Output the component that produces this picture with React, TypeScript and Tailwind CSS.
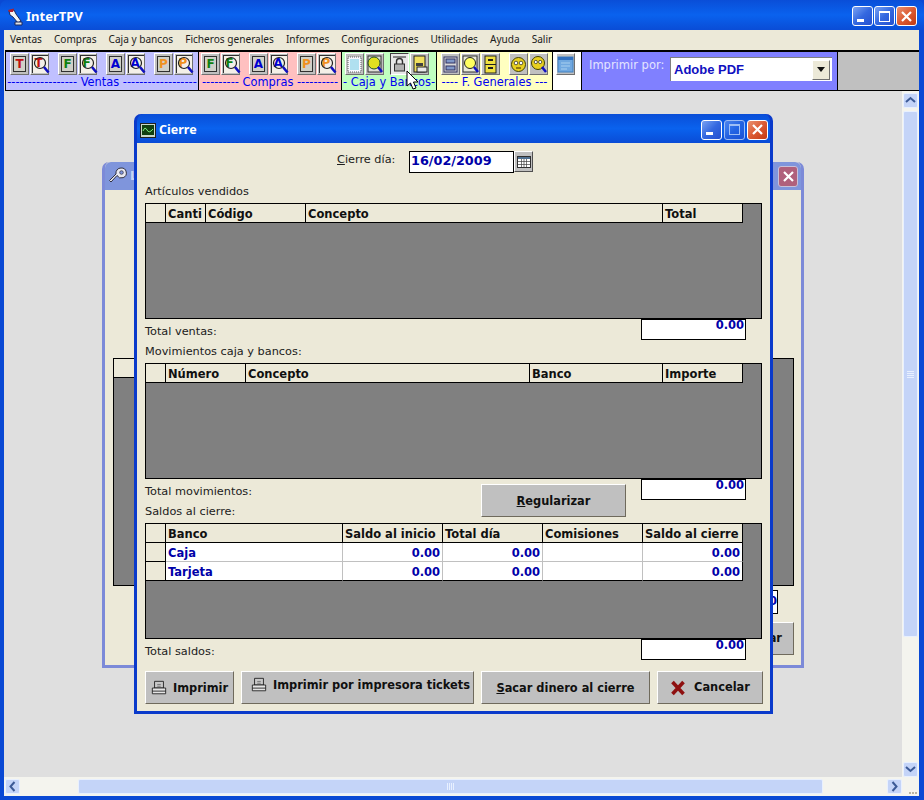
import React from "react";

const UI = "font-['DejaVu_Sans',sans-serif]";
const MENU = "font-['Noto_Sans',sans-serif]";

function WinBtn({ kind, dim }: { kind: "min" | "max" | "close"; dim?: boolean }) {
  const bg =
    kind === "close"
      ? "bg-gradient-to-br from-[#e8906f] via-[#dc5a32] to-[#c23a12]"
      : "bg-gradient-to-br from-[#7ba2f2] via-[#3468e0] to-[#2450d0]";
  return (
    <div className={`w-[21px] h-[20px] rounded-[3px] border border-white flex items-center justify-center ${bg} ${dim ? "opacity-60" : ""}`}>
      <svg width="13" height="13" viewBox="0 0 13 13">
        {kind === "min" && <rect x="1" y="9" width="7" height="3" fill="#fff" />}
        {kind === "max" && (
          <g fill="none" stroke="#fff">
            <rect x="1.5" y="1.5" width="10" height="10" />
            <rect x="1" y="1" width="11" height="2" fill="#fff" stroke="none" />
          </g>
        )}
        {kind === "close" && <path d="M2 2 L11 11 M11 2 L2 11" stroke="#fff" strokeWidth="2.2" />}
      </svg>
    </div>
  );
}

function TBtn({ children, pressed }: { children?: React.ReactNode; pressed?: boolean }) {
  return (
    <div
      className={`relative w-[19px] h-[22px] flex items-center justify-center border ${
        pressed
          ? "border-t-[#404040] border-l-[#404040] border-b-white border-r-white bg-[#e8e8e8]"
          : "border-t-white border-l-white border-b-[#707070] border-r-[#707070] bg-[#c0c0c0]"
      }`}
    >
      {children}
    </div>
  );
}

function Letter({ c, color }: { c: string; color: string }) {
  return (
    <TBtn>
      <div className={`w-[13px] h-[16px] border border-[#303030] bg-[#d0d0c8] flex items-center justify-center text-[12px] leading-none font-bold ${UI} ${color}`}>
        {c}
      </div>
    </TBtn>
  );
}

function Mag({ c, color }: { c: string; color: string }) {
  return (
    <TBtn>
      <div className="relative w-[16px] h-[18px] border-l border-t border-[#303030] bg-[#f4f0e8]">
        <span className={`absolute left-[2px] top-[1px] text-[12px] leading-[13px] font-bold ${UI} ${color}`}>{c}</span>
        <svg className="absolute left-0 top-0" width="17" height="19" viewBox="0 0 17 19">
          <circle cx="7" cy="7" r="5.5" fill="none" stroke="#202020" strokeWidth="1.2" />
          <path d="M11 11 L15.5 16.5" stroke="#1010c0" strokeWidth="2.6" />
        </svg>
      </div>
    </TBtn>
  );
}

function IconBtn({ children, pressed }: { children: React.ReactNode; pressed?: boolean }) {
  return (
    <TBtn pressed={pressed}>
      <svg width="17" height="19" viewBox="0 0 17 19">
        {children}
      </svg>
    </TBtn>
  );
}

function Pair({ c, color }: { c: string; color: string }) {
  return (
    <div className="flex gap-[1px]">
      <Letter c={c} color={color} />
      <Mag c={c} color={color} />
    </div>
  );
}

function Dashes({ text }: { text: string }) {
  return (
    <div className={`h-[14px] overflow-hidden flex justify-center whitespace-nowrap text-[11.4px] leading-[13px] text-[#0000f0] ${UI}`}>
      <span>{text}</span>
    </div>
  );
}

function Toolbar() {
  return (
    <div className="h-[41px] ml-[1px] border-t-2 border-b border-l border-black flex bg-[#c0c0c0]">
      <div className="w-[193px] border-r border-black bg-[#c0c0ff]">
        <div className="h-[24px] pt-[1px] pl-[4px] flex gap-[9px]">
          <Pair c="T" color="text-[#c01010]" />
          <Pair c="F" color="text-[#108010]" />
          <Pair c="A" color="text-[#0000d0]" />
          <Pair c="P" color="text-[#f09020]" />
        </div>
        <Dashes text="----------------- Ventas ------------------" />
      </div>
      <div className="w-[143px] border-r border-black bg-[#ffc0c0]">
        <div className="h-[24px] pt-[1px] pl-[2px] flex gap-[9px]">
          <Pair c="F" color="text-[#108010]" />
          <Pair c="A" color="text-[#0000d0]" />
          <Pair c="P" color="text-[#f09020]" />
        </div>
        <Dashes text="--------- Compras ----------" />
      </div>
      <div className="w-[95px] border-r border-black bg-[#c0ffc0]">
        <div className="h-[24px] pt-[1px] pl-[3px] flex gap-[6px]">
          <div className="flex gap-[1px]">
            <IconBtn>
              <rect x="2" y="2" width="13" height="15" fill="#f8f8ff" stroke="#606060" strokeDasharray="1 1" />
              <rect x="4" y="4" width="9" height="11" fill="#b0e0f0" />
            </IconBtn>
            <IconBtn>
              <rect x="2" y="1" width="13" height="16" fill="#e0e0d8" stroke="#303030" />
              <circle cx="8" cy="8" r="6" fill="#e0e020" stroke="#205020" />
              <path d="M12 12 L16 17" stroke="#1010c0" strokeWidth="2.5" />
            </IconBtn>
          </div>
          <div className="flex gap-[1px]">
            <IconBtn pressed>
              <path d="M2 2 H15" stroke="#202020" />
              <path d="M5.5 9 V6.5 a3 3 0 0 1 6 0 V9" fill="none" stroke="#303030" strokeWidth="1.4" />
              <rect x="3.5" y="9" width="10" height="7" fill="#b0b0b0" stroke="#303030" />
            </IconBtn>
            <IconBtn>
              <rect x="3" y="1" width="11" height="16" fill="#f0e060" stroke="#202020" />
              <rect x="5" y="8" width="7" height="3" fill="#404040" />
              <rect x="6" y="12" width="10" height="5" fill="#e8e8e8" stroke="#202020" />
            </IconBtn>
          </div>
        </div>
        <Dashes text="- Caja y Bancos-" />
      </div>
      <div className="w-[116px] border-r border-black bg-[#ffffc0]">
        <div className="h-[24px] pt-[1px] pl-[4px] flex gap-[9px]">
          <div className="flex gap-[1px]">
            <IconBtn>
              <rect x="2" y="2" width="13" height="15" fill="#d8d8d8" stroke="#303060" />
              <rect x="4" y="4" width="9" height="4" fill="#8098c8" stroke="#303060" />
              <rect x="4" y="11" width="9" height="4" fill="#8098c8" stroke="#303060" />
            </IconBtn>
            <IconBtn>
              <rect x="1" y="1" width="14" height="16" fill="#e8e8d8" stroke="#303030" />
              <circle cx="8" cy="8" r="5.5" fill="#ffff60" stroke="#202020" />
              <path d="M12 12 L16 17" stroke="#1010c0" strokeWidth="2.5" />
            </IconBtn>
            <IconBtn>
              <rect x="3" y="1" width="11" height="17" fill="#f0e040" stroke="#202020" />
              <path d="M3 9.5 H14" stroke="#202020" />
              <rect x="6" y="4" width="5" height="2" fill="#202020" />
              <rect x="6" y="12" width="5" height="2" fill="#202020" />
            </IconBtn>
          </div>
          <div className="flex gap-[1px]">
            <IconBtn>
              <circle cx="8.5" cy="9.5" r="7" fill="#e8d020" stroke="#404000" />
              <circle cx="6" cy="8" r="1.8" fill="#fff" stroke="#202020" strokeWidth="0.7" />
              <circle cx="11" cy="8" r="1.8" fill="#fff" stroke="#202020" strokeWidth="0.7" />
              <path d="M6 13 H11" stroke="#402000" />
            </IconBtn>
            <IconBtn>
              <circle cx="8" cy="8" r="6.5" fill="#e8d020" stroke="#404000" />
              <circle cx="5.8" cy="7" r="1.6" fill="#fff" stroke="#202020" strokeWidth="0.7" />
              <circle cx="10.2" cy="7" r="1.6" fill="#fff" stroke="#202020" strokeWidth="0.7" />
              <path d="M12 12 L16 17" stroke="#1010c0" strokeWidth="2.5" />
            </IconBtn>
          </div>
        </div>
        <Dashes text="---- F. Generales ---" />
      </div>
      <div className="w-[29px] border-r border-black bg-white pt-[1px] pl-[3px]">
        <div className="w-[21px]">
          <TBtn>
            <svg width="17" height="19" viewBox="0 0 17 19">
              <rect x="1" y="2" width="15" height="15" fill="#70a8e0" stroke="#4080c0" />
              <rect x="1" y="2" width="15" height="3" fill="#3070c0" />
              <path d="M4 8 H13 M4 11 H13 M4 14 H10" stroke="#a8d0f0" />
            </svg>
          </TBtn>
        </div>
      </div>
      <div className={`w-[256px] border-r border-black bg-[#8080ff] flex items-start pl-[7px] pt-[5px] ${UI}`}>
        <span className="text-[11.5px] leading-[14px] mt-[1px] text-[#e4e4ff] w-[81px] whitespace-nowrap">Imprimir por:</span>
        <div className="w-[162px] h-[24px] bg-white border-t border-l border-[#808080] border-r-[#e8e8e8] border-b-[#e8e8e8] flex items-center pl-[3px] pr-[2px] justify-between">
          <span className="font-['Liberation_Sans',sans-serif] text-[13px] font-bold text-[#1010c0] leading-none">Adobe PDF</span>
          <div className="w-[18px] h-[20px] bg-[#ece9d8] border border-t-white border-l-white border-b-[#707070] border-r-[#707070] flex items-center justify-center">
            <svg width="8" height="5" viewBox="0 0 8 5"><path d="M0 0 H8 L4 5 Z" fill="#101010" /></svg>
          </div>
        </div>
      </div>
      <div className="flex-1 bg-[#c0c0c0]" />
    </div>
  );
}

type Col = { w: string; label: string };

function Grid({ cols, rows }: { cols: Col[]; rows?: { name: string; vals: string[] }[] }) {
  return (
    <div className={`h-[116px] bg-[#808080] border border-black ${UI}`}>
      <div className="flex h-[19px] w-max">
        <div className="w-[20px] bg-[#ece9d8] border-r border-b border-black" />
        {cols.map((c) => (
          <div key={c.label} className={`${c.w} bg-[#ece9d8] border-r border-b border-black pl-[2px] text-[11.5px] leading-[20px] font-bold text-[#101010] overflow-hidden whitespace-nowrap`}>
            {c.label}
          </div>
        ))}
      </div>
      {rows?.map((r) => (
        <div key={r.name} className="flex h-[19px] w-max">
          <div className="w-[20px] bg-[#ece9d8] border-r border-b border-black" />
          {cols.map((c, i) => (
            <div
              key={c.label}
              className={`${c.w} bg-white border-b ${i === cols.length - 1 ? "border-r border-black" : "border-r border-r-[#c0c0c0]"} ${r.name === "Tarjeta" ? "border-b-black" : "border-b-[#c0c0c0]"} px-[2px] text-[11.5px] leading-[20px] font-bold text-[#0000a8] whitespace-nowrap overflow-hidden ${i === 0 ? "text-left" : "text-right"}`}
            >
              {i === 0 ? r.name : r.vals[i - 1]}
            </div>
          ))}
        </div>
      ))}
    </div>
  );
}

function Total() {
  return (
    <div className={`w-[105px] h-[21px] bg-white border border-black text-right pr-[1px] text-[11.5px] leading-[10px] font-bold text-[#0000a8] ${UI}`}>
      0.00
    </div>
  );
}

function Printer() {
  return (
    <svg width="16" height="16" viewBox="0 0 18 18" className="shrink-0">
      <path d="M4 1.5 H14 V9 H4 Z" fill="#c8c8c8" stroke="#202020" />
      <path d="M7 5 H11 M7 7 H11" stroke="#707070" />
      <path d="M1.5 9 H16.5 V15.5 H1.5 Z" fill="#e4e4e4" stroke="#202020" />
      <path d="M1.5 12.5 H16.5" stroke="#202020" />
    </svg>
  );
}

function Btn({ w, children, className = "" }: { w: string; children: React.ReactNode; className?: string }) {
  return (
    <div className={`${w} h-[33px] shrink-0 bg-[#c0c0c0] border border-t-white border-l-white border-r-[#6f6a5c] border-b-[#6f6a5c] flex items-center justify-center text-[11.4px] font-bold text-[#101010] whitespace-nowrap ${UI} ${className}`}>
      {children}
    </div>
  );
}

function ScrollBtn({ dir }: { dir: "up" | "down" | "left" | "right" }) {
  const d =
    dir === "up"
      ? "M3 9 L7.5 5 L12 9"
      : dir === "down"
        ? "M3 5 L7.5 9 L12 5"
        : dir === "left"
          ? "M9.5 3 L5.5 7.5 L9.5 12"
          : "M5.5 3 L9.5 7.5 L5.5 12";
  return (
    <div className="w-[15px] h-[15px] rounded-[2px] bg-[#c4d4f8] border border-[#e8f0ff] flex items-center justify-center shrink-0">
      <svg width="15" height="15" viewBox="0 0 15 15" className="shrink-0">
        <path d={d} fill="none" stroke="#3c5a96" strokeWidth="2" />
      </svg>
    </div>
  );
}

function CierreDialog() {
  return (
    <div className="absolute left-[130px] top-[23px] w-[639px] h-[600px] rounded-t-[7px] bg-[#0a3fd0] border-x-[3px] border-b-[3px] border-[#0a3acb] flex flex-col">
      <div className="h-[29px] shrink-0 bg-gradient-to-b from-[#0a4ed8] via-[#0a62ee] to-[#0a4cd6] flex items-center pl-[3px] pr-[2px] pt-[3px] rounded-t-[7px]">
        <svg width="16" height="15" viewBox="0 0 16 15" className="shrink-0">
          <rect x="0.5" y="0.5" width="15" height="14" fill="#c8d8c8" stroke="#202020" />
          <rect x="2" y="2" width="12" height="10" fill="#104010" />
          <path d="M3 8 Q5 3 7 7 T13 6" fill="none" stroke="#80f080" />
        </svg>
        <span className={`ml-[3px] text-[12.5px] font-bold text-white ${MENU}`}>Cierre</span>
        <div className="ml-auto flex gap-[2px] pb-[1px]">
          <WinBtn kind="min" />
          <WinBtn kind="max" dim />
          <WinBtn kind="close" />
        </div>
      </div>
      <div className={`flex-1 bg-[#ece9d8] pl-[8px] pr-[8px] text-[11.3px] text-[#202020] ${UI}`}>
        <div className="h-[37px] pt-[8px] flex">
          <span className="ml-[192px] w-[72px] pt-[1px] leading-[16px]"><u>C</u>ierre día:</span>
          <div className="w-[105px] h-[22px] bg-white border border-black pl-[1px] text-[12.8px] leading-[17px] font-bold text-[#0000a8]">16/02/2009</div>
          <div className="w-[19px] h-[21px] bg-[#c0c0c0] border border-t-white border-l-white border-r-[#505050] border-b-[#505050] flex items-center justify-center">
            <svg width="14" height="12" viewBox="0 0 14 12">
              <rect x="0.5" y="0.5" width="13" height="11" fill="#fff" stroke="#303030" />
              <rect x="1" y="1" width="12" height="2" fill="#507090" />
              <path d="M1 5.5 H13 M1 8.5 H13 M4.5 3 V11 M7 3 V11 M9.5 3 V11" stroke="#404040" strokeWidth="0.7" />
            </svg>
          </div>
        </div>
        <div className="h-[23px] pt-[3px] leading-[18px]">Artículos vendidos</div>
        <Grid
          cols={[
            { w: "w-[40px]", label: "Canti" },
            { w: "w-[100px]", label: "Código" },
            { w: "w-[357px]", label: "Concepto" },
            { w: "w-[80px]", label: "Total" },
          ]}
        />
        <div className="h-[44px] flex justify-between">
          <div className="leading-[20px]">
            <div className="h-[20px] pt-[3px]">Total ventas:</div>
            <div className="h-[20px] pt-[3px]">Movimientos caja y bancos:</div>
          </div>
          <div className="mr-[16px]"><Total /></div>
        </div>
        <Grid
          cols={[
            { w: "w-[80px]", label: "Número" },
            { w: "w-[284px]", label: "Concepto" },
            { w: "w-[133px]", label: "Banco" },
            { w: "w-[80px]", label: "Importe" },
          ]}
        />
        <div className="h-[44px] flex">
          <div className="w-[336px] leading-[20px]">
            <div className="h-[20px] pt-[3px]">Total movimientos:</div>
            <div className="h-[20px] pt-[3px]">Saldos al cierre:</div>
          </div>
          <div className="w-[160px] pt-[5px]">
            <Btn w="w-[145px]"><span className="pt-[2px]"><u>R</u>egularizar</span></Btn>
          </div>
          <Total />
        </div>
        <Grid
          cols={[
            { w: "w-[177px]", label: "Banco" },
            { w: "w-[100px]", label: "Saldo al inicio" },
            { w: "w-[100px]", label: "Total día" },
            { w: "w-[100px]", label: "Comisiones" },
            { w: "w-[100px]", label: "Saldo al cierre" },
          ]}
          rows={[
            { name: "Caja", vals: ["0.00", "0.00", "", "0.00"] },
            { name: "Tarjeta", vals: ["0.00", "0.00", "", "0.00"] },
          ]}
        />
        <div className="h-[32px] flex justify-between">
          <div className="leading-[20px] pt-[3px]">Total saldos:</div>
          <div className="mr-[16px]"><Total /></div>
        </div>
        <div className="flex gap-[7px]">
          <Btn w="w-[89px]" className="gap-[6px]"><Printer /><span className="pt-[2px]">Imprimir</span></Btn>
          <Btn w="w-[233px]" className="gap-[6px] items-start pt-[5px] pl-[6px]"><Printer /><span className="leading-[17px]">Imprimir por impresora tickets</span></Btn>
          <Btn w="w-[169px]"><span className="pt-[2px]"><u>S</u>acar dinero al cierre</span></Btn>
          <Btn w="w-[106px]" className="gap-[8px]">
            <svg width="16" height="16" viewBox="0 0 16 16" className="shrink-0">
              <path d="M2.5 2 L13.5 14 M13.5 2 L2.5 14" stroke="#8e1010" strokeWidth="3.6" />
            </svg>
            <span>Cancelar</span>
          </Btn>
        </div>
      </div>
    </div>
  );
}

function BackWindow() {
  return (
    <div className="absolute left-[98px] top-[71px] w-[702px] h-[506px] rounded-t-[7px] border-x-[3px] border-b-[3px] border-[#7c8ad8] bg-[#ece9d8] flex flex-col">
      <div className="h-[28px] shrink-0 bg-[#7f95dc] rounded-t-[6px] flex items-center pl-[3px] pr-[3px]">
        <svg width="20" height="20" viewBox="0 0 20 20">
          <path d="M13 2 a5 5 0 1 1 -4 7.5 L3 16 L1.5 14.5 L8 8 a5 5 0 0 1 5 -6 Z" fill="#e8e8f0" stroke="#303040" strokeWidth="1" />
          <circle cx="13.5" cy="6.5" r="1.8" fill="#7f95dc" stroke="#303040" strokeWidth="0.7" />
        </svg>
        <span className={`ml-[2px] text-[12px] font-bold text-[#c8d4f4] ${UI}`}>L</span>
        <div className="ml-auto w-[20px] h-[21px] rounded-[3px] border border-[#c8c0d8] bg-[#b0607c] flex items-center justify-center">
          <svg width="13" height="13" viewBox="0 0 13 13"><path d="M2 2 L11 11 M11 2 L2 11" stroke="#fff" strokeWidth="2.2" /></svg>
        </div>
      </div>
      <div className="flex-1 pl-[8px] pr-[7px] flex flex-col items-end">
        <div className="mt-[168px] w-full h-[228px] border border-black bg-[#808080]">
          <div className="w-[21px] h-[19px] bg-[#ece9d8] border-r border-b border-black" />
        </div>
        <div className={`mt-[4px] mr-[16px] w-[40px] h-[24px] bg-white border border-black text-right text-[11.5px] leading-[20px] font-bold text-[#0000a8] ${UI}`}>0</div>
        <div className={`mt-[8px] w-[60px] h-[33px] bg-[#c0c0c0] border border-t-white border-l-white border-r-[#6f6a5c] border-b-[#6f6a5c] text-right pr-[11px] text-[11.4px] leading-[30px] font-bold text-[#101010] ${UI}`}>ar</div>
      </div>
    </div>
  );
}

function Grip({ vertical }: { vertical?: boolean }) {
  return (
    <div className={`flex items-center justify-center ${vertical ? "flex-col gap-[1px]" : "gap-[1px]"}`}>
      {[0, 1, 2, 3].map((i) => (
        <div key={i} className={`${vertical ? "w-[7px] h-[1px]" : "w-[1px] h-[7px]"} bg-[#e8f0ff]`} />
      ))}
    </div>
  );
}

export default function App() {
  return (
    <div className="w-[924px] h-[800px] relative bg-[#0a49d4] overflow-hidden">
      <div className="h-[30px] bg-gradient-to-b from-[#0a4ed8] via-[#0a62ee] to-[#0a4cd6] rounded-t-[7px] flex items-center pl-[6px] pr-[7px] pt-[3px]">
        <svg width="18" height="20" viewBox="0 0 18 20" className="shrink-0">
          <path d="M3 4 L8 3 L10 7 L15 14 L12 16 L7 10 L4 8 Z" fill="#f4f4f4" stroke="#182860" />
          <path d="M2 3 L8 1.5 L7 5 L3 5 Z" fill="#b02030" />
          <path d="M9 15 L16 15 L16 18 L9 18 Z" fill="#e0e0e0" stroke="#182860" />
        </svg>
        <span className={`ml-[2px] text-[13px] font-bold text-white ${MENU}`}>InterTPV</span>
        <div className="ml-auto flex gap-[1px] pb-[1px]">
          <WinBtn kind="min" />
          <WinBtn kind="max" />
          <WinBtn kind="close" />
        </div>
      </div>
      <div className="absolute left-[4px] top-[30px] w-[915px] h-[766px] flex flex-col bg-[#ece9d8]">
        <div className={`h-[20px] shrink-0 flex items-center pl-[6px] gap-[12px] text-[10.1px] text-[#202020] ${MENU}`}>
          <span>Ventas</span>
          <span>Compras</span>
          <span>Caja y bancos</span>
          <span>Ficheros generales</span>
          <span>Informes</span>
          <span>Configuraciones</span>
          <span>Utilidades</span>
          <span>Ayuda</span>
          <span>Salir</span>
        </div>
        <Toolbar />
        <div className="flex-1 flex flex-col min-h-0">
          <div className="flex-1 flex min-h-0">
            <div className="relative flex-1 bg-[#dfdfdf]">
              <BackWindow />
              <CierreDialog />
            </div>
            <div className="w-[17px] bg-[#f4f4ee] flex flex-col items-center pt-[2px]">
              <ScrollBtn dir="up" />
              <div className="mt-[3px] w-[15px] h-[526px] rounded-[2px] bg-[#c4d4f8] border border-[#e8f0ff] flex items-center justify-center">
                <Grip vertical />
              </div>
              <div className="flex-1" />
              <ScrollBtn dir="down" />
            </div>
          </div>
          <div className="h-[19px] shrink-0 flex items-center bg-[#f4f4ee]">
            <div className="w-[15px] ml-[1px]"><ScrollBtn dir="left" /></div>
            <div className="ml-[58px] w-[745px] h-[15px] rounded-[2px] bg-[#c4d4f8] border border-[#e8f0ff] flex items-center justify-center">
              <Grip />
            </div>
            <div className="flex-1" />
            <ScrollBtn dir="right" />
            <div className="w-[17px] flex flex-wrap content-end justify-end gap-[1px] h-[15px] pr-[2px]">
              {[0, 1, 2].map((i) => (
                <div key={i} className="w-[2px] h-[2px] bg-[#b8b4a4]" />
              ))}
            </div>
          </div>
        </div>
      </div>
      <svg className="absolute left-[406px] top-[70px]" width="15" height="22" viewBox="0 0 15 22">
        <path d="M1 1 V16 L4.5 13 L7 19 L10 18 L7.5 12 L12 12 Z" fill="#fff" stroke="#000" />
      </svg>
    </div>
  );
}
